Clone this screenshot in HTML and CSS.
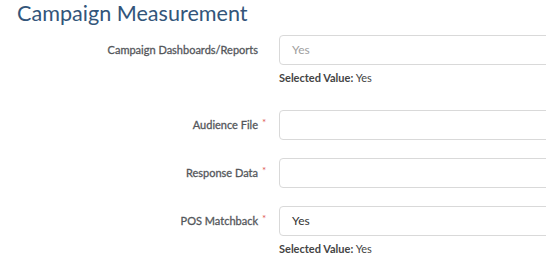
FILE: index.html
```html
<!DOCTYPE html>
<html lang="en">
  <head>
    <meta charset="UTF-8" />
    <title>Campaign Measurement</title>
    <link rel="stylesheet" href="styles.css">
  </head>
  <body>
    <h2 class="section-title">Campaign Measurement</h2>

    <div class="form">
      <div class="field">
        <div class="field-row">
          <label class="field-label">Campaign Dashboards/Reports<span class="req"></span></label>
          <div class="field-input placeholder">Yes</div>
        </div>
        <div class="help"><b>Selected Value:</b> Yes</div>
      </div>

      <div class="field">
        <div class="field-row">
          <label class="field-label">Audience File<span class="req">*</span></label>
          <div class="field-input"></div>
        </div>
      </div>

      <div class="field">
        <div class="field-row">
          <label class="field-label">Response Data<span class="req">*</span></label>
          <div class="field-input"></div>
        </div>
      </div>

      <div class="field">
        <div class="field-row">
          <label class="field-label">POS Matchback<span class="req">*</span></label>
          <div class="field-input">Yes</div>
        </div>
        <div class="help"><b>Selected Value:</b> Yes</div>
      </div>
    </div>
  </body>
</html>
```

FILE: styles.css
```css
body {
  margin: 0;
  font-family: "Lato", sans-serif;
  background-color: #fff;
  color: #333;
  overflow: hidden;
}

.section-title {
  margin: 0 0 9px 17px;
  font-size: 21.6px;
  font-weight: 400;
  line-height: 26px;
  color: #33557a;
}

.form {
  width: 600px;
}

.field {
  margin-bottom: 18px;
}

.field-row {
  display: flex;
  align-items: center;
}

.field-label {
  width: 267px;
  margin-right: 12px;
  display: flex;
  justify-content: flex-end;
  font-size: 11px;
  font-weight: 400;
  line-height: 16px;
  color: #54575b;
  -webkit-text-stroke: 0.3px #54575b;
}

.req {
  width: 9px;
  padding-left: 4px;
  box-sizing: border-box;
  font-size: 10px;
  line-height: 10px;
  color: #e05a55;
  -webkit-text-stroke: 0;
}

.field-input {
  width: 300px;
  height: 30px;
  box-sizing: border-box;
  padding: 0 12px;
  border: 1px solid #d9d9d9;
  border-radius: 4px;
  font-size: 12px;
  line-height: 28px;
  color: #333;
}

.field-input.placeholder {
  color: #a0a0a0;
}

.help {
  margin: 5px 0 0 279px;
  padding-bottom: 6px;
  font-size: 11px;
  line-height: 16px;
  color: #444;
}

.help b {
  font-weight: 700;
}
```
